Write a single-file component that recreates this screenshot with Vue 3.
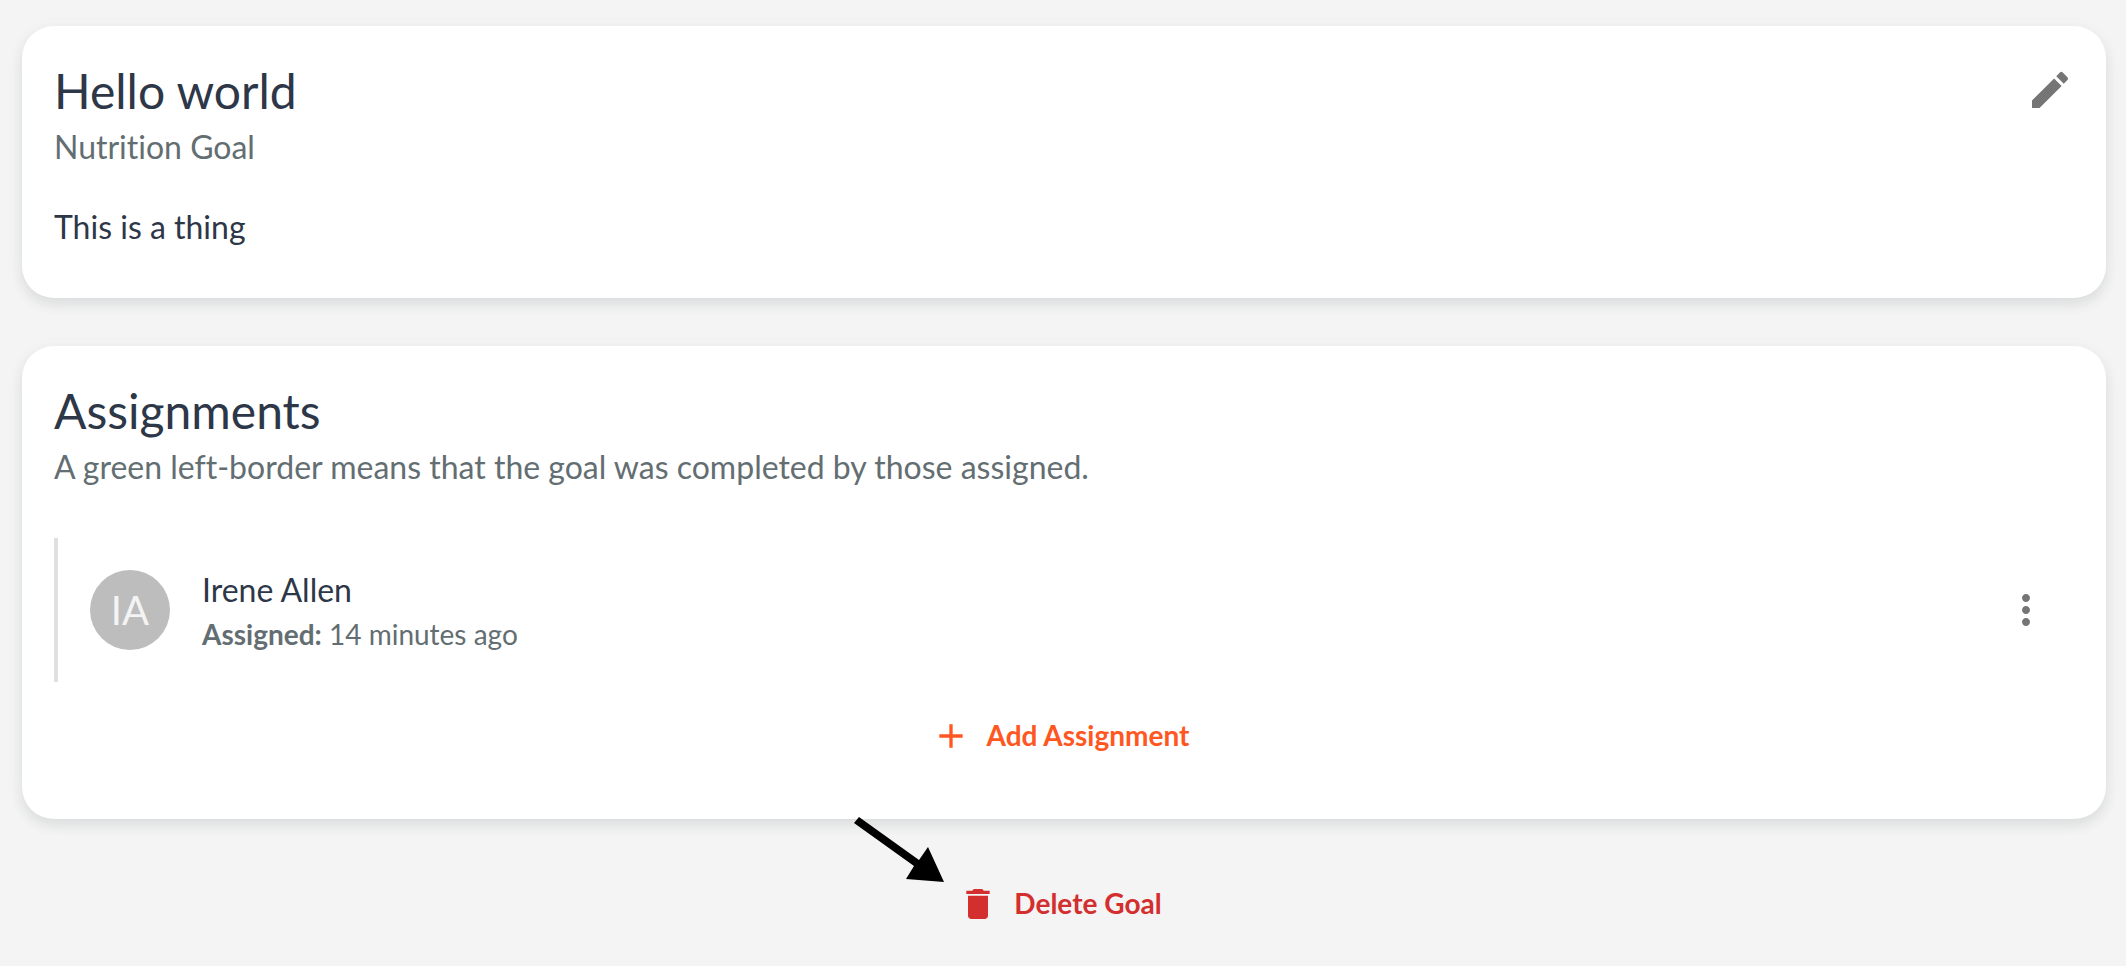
<script setup>
const goal = {
  title: 'Hello world',
  type: 'Nutrition Goal',
  description: 'This is a thing',
}

const assignments = [
  { id: 1, initials: 'IA', name: 'Irene Allen', assigned: '14 minutes ago' },
]
</script>

<template>
  <main class="page">
    <section class="card">
      <header class="card-header">
        <div>
          <h1 class="title">{{ goal.title }}</h1>
          <p class="subtitle">{{ goal.type }}</p>
        </div>
        <button class="icon-button edit" type="button" aria-label="Edit goal">
          <svg class="icon-large" viewBox="0 0 24 24" aria-hidden="true">
            <path d="M3 17.25V21h3.75L17.81 9.94l-3.75-3.75L3 17.25zM20.71 7.04c.39-.39.39-1.02 0-1.41l-2.34-2.34a.9959.9959 0 0 0-1.41 0l-1.83 1.83 3.75 3.75 1.83-1.83z" />
          </svg>
        </button>
      </header>
      <p class="description">{{ goal.description }}</p>
    </section>

    <section class="card">
      <h2 class="title">Assignments</h2>
      <p class="subtitle">A green left-border means that the goal was completed by those assigned.</p>
      <ul class="assignments">
        <li v-for="item in assignments" :key="item.id" class="assignment">
          <span class="avatar" aria-hidden="true">{{ item.initials }}</span>
          <div class="person">
            <p class="name">{{ item.name }}</p>
            <p class="meta"><strong>Assigned:</strong> {{ item.assigned }}</p>
          </div>
          <button class="icon-button more" type="button" aria-label="Assignment options">
            <svg class="icon-large" viewBox="0 0 24 24" aria-hidden="true">
              <path d="M12 8c1.1 0 2-.9 2-2s-.9-2-2-2-2 .9-2 2 .9 2 2 2zm0 2c-1.1 0-2 .9-2 2s.9 2 2 2 2-.9 2-2-.9-2-2-2zm0 6c-1.1 0-2 .9-2 2s.9 2 2 2 2-.9 2-2-.9-2-2-2z" />
            </svg>
          </button>
        </li>
      </ul>
      <div class="actions">
        <button class="text-button add" type="button">
          <svg class="icon" viewBox="0 0 24 24" aria-hidden="true">
            <path d="M19 13h-6v6h-2v-6H5v-2h6V5h2v6h6v2z" />
          </svg>
          Add Assignment
        </button>
      </div>
    </section>

    <div class="actions">
      <div class="delete-wrap">
        <svg class="arrow" viewBox="0 0 90 65" aria-hidden="true">
          <path d="M5 0L65 43L74 30L90 65L52 62L60 49L0 6Z" />
        </svg>
        <button class="text-button delete" type="button">
          <svg class="icon" viewBox="0 0 24 24" aria-hidden="true">
            <path d="M6 19c0 1.1.9 2 2 2h8c1.1 0 2-.9 2-2V7H6v12zM19 4h-3.5l-1-1h-5l-1 1H5v2h14V4z" />
          </svg>
          Delete Goal
        </button>
      </div>
    </div>
  </main>
</template>

<style>
body {
  background: #f4f4f4;
}
</style>

<style scoped>
.page {
  display: flex;
  flex-direction: column;
  gap: 48px;
  padding: 26px 20px 26px 22px;
  color: #2d3748;
  font-family: Lato, "Noto Sans", sans-serif;
  font-variant-ligatures: none;
}

.card {
  padding: 33px 32px 47px;
  border-radius: 32px;
  background: #fff;
  box-shadow: 0 6px 12px rgba(45, 55, 72, 0.1), 0 4px 20px rgba(45, 72, 72, 0.04);
}

.card-header {
  display: flex;
  justify-content: space-between;
  align-items: flex-start;
}

.title,
.subtitle,
.description,
.name,
.meta {
  margin: 0;
  font-weight: 400;
}

.title {
  font-size: 48px;
  line-height: 64px;
}

.subtitle,
.description,
.name {
  font-size: 32px;
  line-height: 48px;
}

.subtitle,
.meta {
  color: #636e72;
}

.description {
  margin-top: 32px;
}

.assignments {
  margin: 47px 0 17px;
  padding: 0;
  list-style: none;
}

.assignment {
  display: flex;
  align-items: center;
  gap: 32px;
  padding: 28px 0 28px 32px;
  border-left: 4px solid #e0e0e0;
}

.avatar {
  display: flex;
  align-items: center;
  justify-content: center;
  flex: none;
  width: 80px;
  height: 80px;
  border-radius: 50%;
  background: #bdbdbd;
  color: #f4f4f4;
  font-size: 40px;
  line-height: 40px;
}

.person {
  flex: 1;
}

.meta {
  font-size: 28px;
  line-height: 40px;
}

.meta strong {
  font-weight: 700;
}

.icon-button,
.text-button {
  border: 0;
  background: none;
  font-family: inherit;
  cursor: pointer;
}

.icon-button {
  display: flex;
  padding: 0;
  color: #757575;
}

.edit {
  margin-top: 7px;
}

.more {
  margin-right: 24px;
}

.icon-large {
  width: 48px;
  height: 48px;
  fill: currentColor;
}

.icon {
  width: 40px;
  height: 40px;
  fill: currentColor;
}

.actions {
  display: flex;
  justify-content: center;
}

.text-button {
  display: flex;
  align-items: center;
  gap: 16px;
  padding: 12px 16px 12px 8px;
  font-size: 28px;
  font-weight: 700;
  line-height: 49px;
}

.add {
  color: #ff5722;
}

.delete {
  color: #d32f2f;
}

.delete-wrap {
  position: relative;
}

.arrow {
  position: absolute;
  top: -50px;
  left: -96px;
  width: 90px;
  height: 65px;
}
</style>
